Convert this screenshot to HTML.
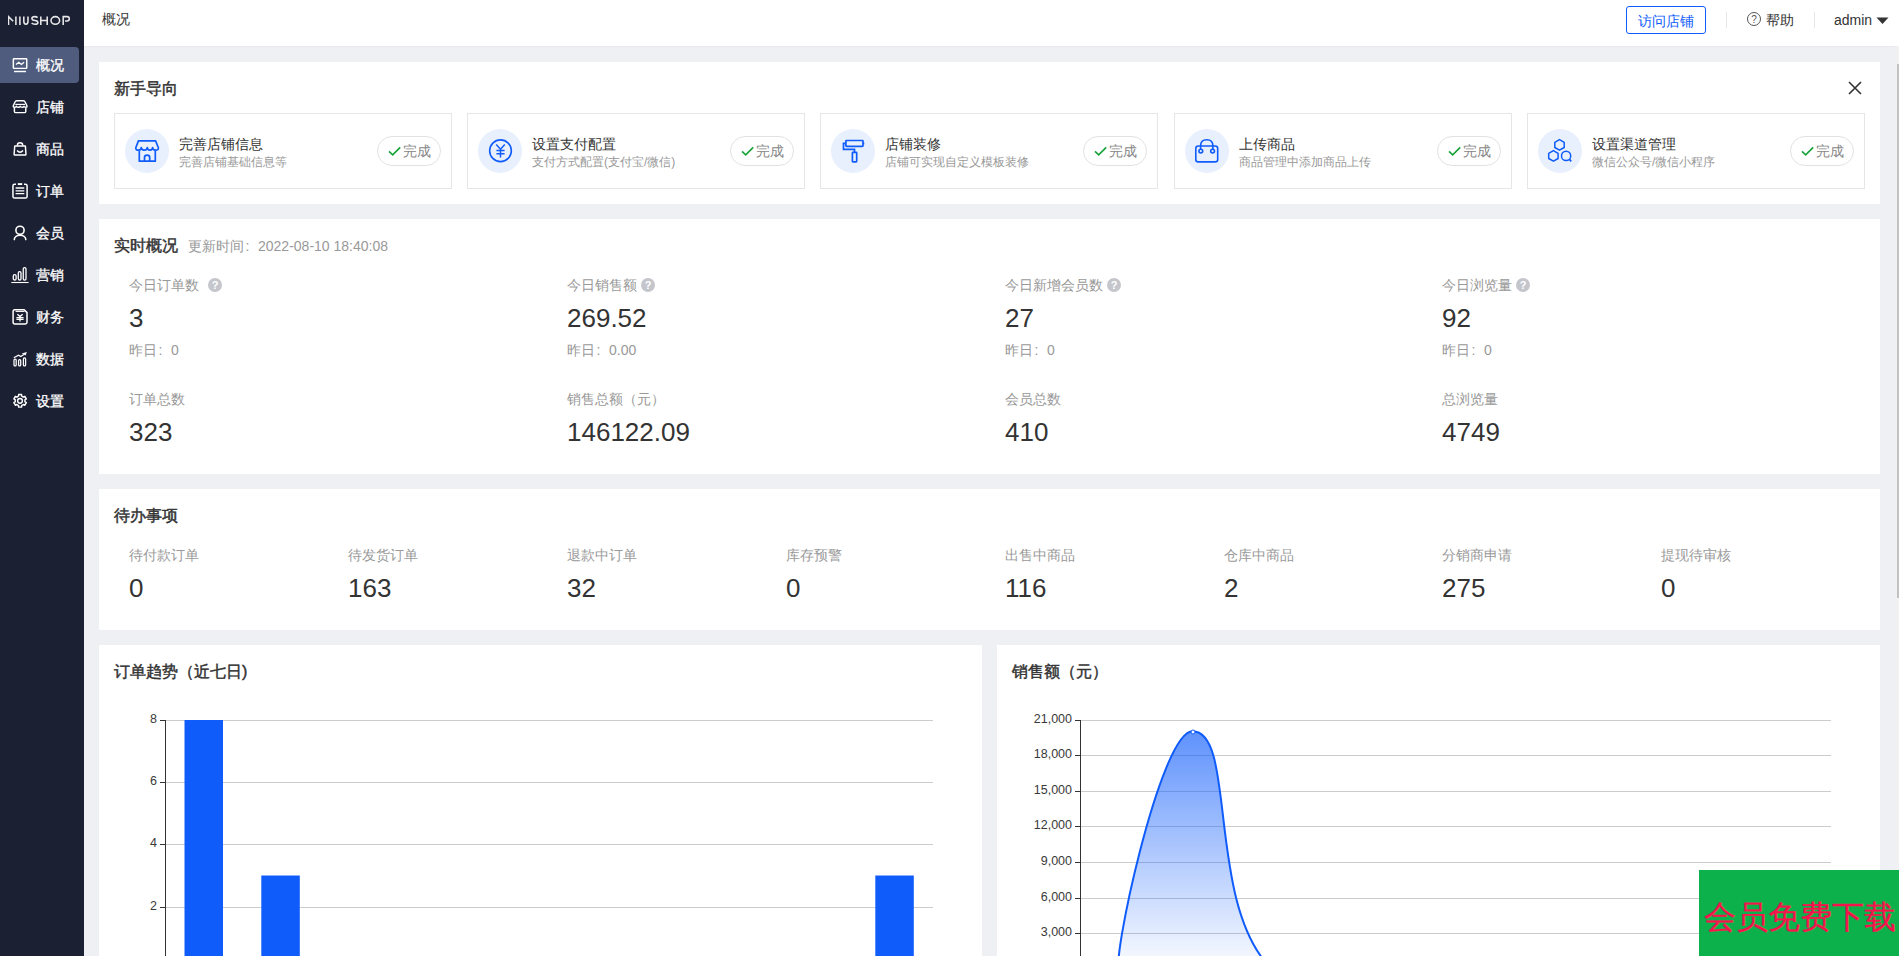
<!DOCTYPE html>
<html><head><meta charset="utf-8">
<style>
*{box-sizing:border-box;margin:0;padding:0}
html,body{width:1899px;height:956px;overflow:hidden;background:#eff0f4;font-family:"Liberation Sans",sans-serif;color:#333}
.abs{position:absolute;white-space:nowrap}
#side{position:absolute;left:0;top:0;width:84px;height:956px;background:#1c2033}
#side .item{position:absolute;left:0;width:79px;height:36px;color:#fff;font-size:14px;font-weight:normal;-webkit-text-stroke:0.3px #fff}
#side .item.on{background:#505c7d;border-radius:0 4px 4px 0}
#side .item span{position:absolute;left:36px;top:8px;line-height:20px}
#side .item svg{position:absolute;left:11px;top:10px;overflow:visible}
#head{position:absolute;left:84px;top:0;width:1815px;height:46px;background:#fff}
.card{position:absolute;background:#fff}
.ttl{position:absolute;font-size:16px;font-weight:normal;-webkit-text-stroke:0.45px #333;color:#333;line-height:22px;white-space:nowrap;margin-top:1px}
.gbox{position:absolute;top:51px;width:338px;height:76px;border:1px solid #e6e6e6}
.gbox .ic{position:absolute;left:10px;top:15px;width:44px;height:44px;border-radius:50%;background:#e8effd}
.gbox .ic svg{position:absolute;left:0;top:0}
.gbox .t1{position:absolute;left:64px;top:20px;font-size:14px;line-height:20px;color:#333;white-space:nowrap}
.gbox .t2{position:absolute;left:64px;top:40px;font-size:12px;line-height:16px;color:#999;white-space:nowrap}
.gbox .done{position:absolute;right:10px;top:22px;width:64px;height:30px;border:1px solid #e2e2e2;border-radius:15px;font-size:14px;color:#888;line-height:28px}
.gbox .done span{position:absolute;left:25px;top:0}
.gbox .done svg{position:absolute;left:10px;top:9px}
.st{position:absolute}
.st .l{position:absolute;left:0;top:0;font-size:14px;line-height:20px;color:#999;white-space:nowrap}
.st .v{position:absolute;left:0;top:28px;font-size:26px;line-height:30px;color:#333;white-space:nowrap}
.st .y{position:absolute;left:0;top:65px;font-size:14px;line-height:20px;color:#999;white-space:nowrap}
.q{display:inline-block;width:14px;height:14px;border-radius:50%;background:#c4c6cc;color:#fff;font-size:11px;line-height:14px;text-align:center;font-weight:bold;vertical-align:1px;margin-left:9px}
.cl{display:inline-block;width:14px;padding-left:1.5px}
.gl{position:absolute;height:1px;background:#ccc}
.yl{position:absolute;font-size:12px;line-height:14px;color:#333;text-align:right;white-space:nowrap}
</style></head><body>
<div id="side">
  <svg class="abs" style="left:8px;top:15px" width="64" height="11" viewBox="0 0 64 11">
    <g fill="none" stroke="#e8e8ea" stroke-width="1.55">
      <path d="M0.5 10V1.6L5.2 6.3"/>
      <path d="M7.9 1.5V10"/>
      <path d="M11.9 1.5V10"/>
      <path d="M15.8 1.5V6.3Q15.8 9.2 17.9 9.2Q20 9.2 20 6.3V1.5"/>
      <path d="M29.6 2.6Q28.6 1.6 26.8 1.6Q23.9 1.6 23.9 3.5Q23.9 5.2 26.9 5.5Q29.9 5.8 29.9 7.4Q29.9 9.2 26.9 9.2Q24.8 9.2 23.6 8"/>
      <path d="M32.8 1.5V10M32.8 5.5H39.2M39.2 1.5V10"/>
      <ellipse cx="47.3" cy="5.4" rx="4.3" ry="3.8"/>
      <path d="M55.2 10V1.6H59Q61.3 1.6 61.3 3.8Q61.3 6 59 6H57"/>
    </g>
  </svg>
  <div class="item on" style="top:47px"><svg width="18" height="18" viewBox="0 0 18 18"><g fill="none" stroke="#fff" stroke-width="1.45"><rect x="2.35" y="1.65" width="13.4" height="9.7" rx="0.6"/><path d="M5 7.55L7.8 5.3L10.4 7.45L13.1 5.2" stroke-width="1.3"/><path d="M3 14.5H15"/></g></svg><span>概况</span></div>
  <div class="item" style="top:89px"><svg width="18" height="18" viewBox="0 0 18 18"><g fill="none" stroke="#fff" stroke-width="1.45"><path d="M5.8 1.65H12.3Q13.6 1.65 14.1 3L15.9 6.8Q16.4 8.3 15 8.3Q13.1 8.3 13 7.2Q12.6 8.3 11.2 8.3Q9.4 8.3 9.2 7.2Q8.9 8.3 7.2 8.3Q5.6 8.3 5.4 7.2Q5.1 8.3 3.3 8.3Q2 8.3 2.3 6.8L4 3Q4.5 1.65 5.8 1.65Z" stroke-linejoin="round"/><path d="M4.3 5.4H14.1" stroke-width="1.2"/><path d="M3.4 9V12.6Q3.4 13.6 4.4 13.6H13.8Q14.8 13.6 14.8 12.6V9"/></g></svg><span>店铺</span></div>
  <div class="item" style="top:131px"><svg width="18" height="18" viewBox="0 0 18 18"><g fill="none" stroke="#fff" stroke-width="1.45"><path d="M6.4 4.8V4.2Q6.4 1.65 9.05 1.65Q11.7 1.65 11.7 4.2V4.8"/><path d="M4 5H14.1Q14.4 5 14.4 5.4L15 13.6Q15 14 14.6 14H3.5Q3.1 14 3.1 13.6L3.7 5.4Q3.7 5 4 5Z"/><path d="M6.1 9.6Q9.05 13 12 9.6"/></g></svg><span>商品</span></div>
  <div class="item" style="top:173px"><svg width="18" height="18" viewBox="0 0 18 18"><g fill="none" stroke="#fff" stroke-width="1.5"><path d="M5 1.3H3.6Q1.95 1.3 1.95 3V13.4Q1.95 15.1 3.6 15.1H14.4Q16.1 15.1 16.1 13.4V3Q16.1 1.3 14.4 1.3H13"/><path d="M6.8 1.1H11.2" stroke-width="1.9"/><path d="M4.6 5H13.3M4.6 7.8H13.3M4.6 10.6H13.3" stroke-width="1.3"/></g></svg><span>订单</span></div>
  <div class="item" style="top:215px"><svg width="18" height="18" viewBox="0 0 18 18"><g fill="none" stroke="#fff" stroke-width="1.6"><circle cx="9" cy="5.3" r="4.1"/><path d="M3.3 14.6C3.3 8.8 14.8 8.8 14.8 14.6" stroke-linecap="round"/></g></svg><span>会员</span></div>
  <div class="item" style="top:257px"><svg width="18" height="18" viewBox="0 0 18 18"><g fill="none" stroke="#fff" stroke-width="1.3"><rect x="2.3" y="7.6" width="2.8" height="5.4" rx="1.3"/><rect x="7.3" y="4.6" width="2.7" height="8.4" rx="1.3"/><rect x="12.25" y="0.65" width="2.75" height="12.4" rx="1.3"/><path d="M0.3 15.5H17.6" stroke-width="1.1"/></g></svg><span>营销</span></div>
  <div class="item" style="top:299px"><svg width="18" height="18" viewBox="0 0 18 18"><g fill="none" stroke="#fff" stroke-width="1.5"><path d="M3.8 0.8H13.2L16 3.6V13.3Q16 15 14.3 15H3.8Q2.1 15 2.1 13.3V2.5Q2.1 0.8 3.8 0.8Z" stroke-linejoin="round"/><path d="M4.6 2.4H13.5" stroke-width="1.1"/><path d="M6.4 5.3L9 7.6L11.7 5.3M9 7.6V12.5M5.4 8.6H12.6M5.4 10.4H12.6" stroke-width="1.3"/></g></svg><span>财务</span></div>
  <div class="item" style="top:341px"><svg width="18" height="18" viewBox="0 0 18 18"><g fill="none" stroke="#fff" stroke-width="1.25"><rect x="3" y="8.1" width="2.2" height="6.8" rx="1"/><rect x="7.6" y="8.6" width="2.1" height="6.3" rx="1"/><rect x="12.4" y="6.9" width="2.2" height="8" rx="1"/><path d="M2.8 6.8L7.5 4.2L9.8 5.6L12.8 3.4"/></g><path d="M15.9 0.9L10.8 2.6L14.6 4.6Z" fill="#fff"/></svg><span>数据</span></div>
  <div class="item" style="top:383px"><svg width="18" height="18" viewBox="0 0 18 18"><g fill="none" stroke="#fff" stroke-width="1.45" stroke-linejoin="round"><path d="M11.55 3.56 L10.70 3.17 L10.56 1.47 L7.64 1.47 L7.50 3.17 L6.65 3.56 L5.89 4.10 L4.35 3.37 L2.88 5.90 L4.29 6.87 L4.20 7.80 L4.29 8.73 L2.88 9.70 L4.35 12.23 L5.89 11.50 L6.65 12.04 L7.50 12.43 L7.64 14.13 L10.56 14.13 L10.70 12.43 L11.55 12.04 L12.31 11.50 L13.85 12.23 L15.32 9.70 L13.91 8.73 L14.00 7.80 L13.91 6.87 L15.32 5.90 L13.85 3.37 L12.31 4.10Z"/><circle cx="9" cy="7.8" r="2.4"/></g></svg><span>设置</span></div>
</div>

<div class="abs" style="left:85px;top:46px;width:1810px;height:1px;background:#e9e9eb"></div>
<div id="head">
  <div class="abs" style="left:18px;top:9px;font-size:14px;line-height:20px;color:#333">概况</div>
  <div class="abs" style="left:1542px;top:6px;width:80px;height:28px;border:1px solid #105cfb;border-radius:3px;color:#105cfb;font-size:14px;line-height:28px;text-align:center">访问店铺</div>
  <div class="abs" style="left:1642px;top:12px;width:1px;height:16px;background:#e6e6e6"></div>
  <svg class="abs" style="left:1662px;top:11px" width="16" height="16" viewBox="0 0 16 16"><circle cx="8" cy="8" r="6.5" fill="none" stroke="#555" stroke-width="1"/><text x="8" y="12" font-size="10" text-anchor="middle" fill="#555" font-family="Liberation Sans">?</text></svg>
  <div class="abs" style="left:1682px;top:10px;font-size:14px;line-height:20px;color:#333">帮助</div>
  <div class="abs" style="left:1730px;top:12px;width:1px;height:16px;background:#e6e6e6"></div>
  <div class="abs" style="left:1750px;top:10px;font-size:14px;line-height:20px;color:#333">admin</div>
  <svg class="abs" style="left:1792px;top:16.5px" width="13" height="8" viewBox="0 0 13 8"><path d="M0.5 0.5H12.5L6.5 7Z" fill="#333"/></svg>
</div>

<!-- Guide card -->
<div class="card" style="left:99px;top:62px;width:1781px;height:142px">
  <div class="ttl" style="left:15px;top:15px">新手导向</div>
  <svg class="abs" style="left:1749px;top:19px" width="14" height="14" viewBox="0 0 14 14"><path d="M1 1L13 13M13 1L1 13" stroke="#333" stroke-width="1.6"/></svg>
  <div class="gbox" style="left:15px">
    <div class="ic"><svg width="44" height="44" viewBox="0 0 44 44"><g fill="none" stroke="#105cfb" stroke-width="1.7" stroke-linejoin="round"><path d="M13.4 11.9H30.6L33.4 18.7Q33.6 21.2 30.5 21.2Q27.6 21.2 27.6 18.6Q27.6 21.2 25 21.2Q22.3 21.2 22.3 18.6Q22.3 21.2 19.3 21.2Q16.3 21.2 16.3 18.6Q16.3 21.2 13.5 21.2Q10.6 21.2 10.8 18.7Z"/><path d="M14.3 21.4V32.2H30.3V21.4"/><path d="M19.5 32.2V28.6Q19.5 26.2 22.1 26.2Q24.7 26.2 24.7 28.6V32.2"/></g></svg></div>
    <div class="t1">完善店铺信息</div><div class="t2">完善店铺基础信息等</div>
    <div class="done"><svg width="14" height="11" viewBox="0 0 14 11"><path d="M1 5.3L4.7 8.8L12.2 1.3" fill="none" stroke="#1aa33b" stroke-width="1.7"/></svg><span>完成</span></div>
  </div>
  <div class="gbox" style="left:368px">
    <div class="ic"><svg width="44" height="44" viewBox="0 0 44 44"><g fill="none" stroke="#105cfb" stroke-width="1.6"><circle cx="22.5" cy="21.75" r="10.85"/><path d="M18.2 15.6L22.5 20.2L26.8 15.6M22.5 20.2V28.6M18.4 21.4H26.6M18.4 24.7H26.6" stroke-width="1.5"/></g></svg></div>
    <div class="t1">设置支付配置</div><div class="t2">支付方式配置(支付宝/微信)</div>
    <div class="done"><svg width="14" height="11" viewBox="0 0 14 11"><path d="M1 5.3L4.7 8.8L12.2 1.3" fill="none" stroke="#1aa33b" stroke-width="1.7"/></svg><span>完成</span></div>
  </div>
  <div class="gbox" style="left:721px">
    <div class="ic"><svg width="44" height="44" viewBox="0 0 44 44"><g fill="none" stroke="#105cfb" stroke-width="1.7"><rect x="14.9" y="11.5" width="17.1" height="5.8" rx="0.6"/><path d="M32.6 13.5V15.4" stroke-width="1.4"/><path d="M14.9 14.4H12.5V20.4H23.5V23.3"/><rect x="21.4" y="23.3" width="4.3" height="9.6" rx="0.6"/></g></svg></div>
    <div class="t1">店铺装修</div><div class="t2">店铺可实现自定义模板装修</div>
    <div class="done"><svg width="14" height="11" viewBox="0 0 14 11"><path d="M1 5.3L4.7 8.8L12.2 1.3" fill="none" stroke="#1aa33b" stroke-width="1.7"/></svg><span>完成</span></div>
  </div>
  <div class="gbox" style="left:1075px">
    <div class="ic"><svg width="44" height="44" viewBox="0 0 44 44"><g fill="none" stroke="#105cfb" stroke-width="1.6"><path d="M15.6 20V17Q15.6 10.8 21.75 10.8Q27.9 10.8 27.9 17V20"/><rect x="10.8" y="17" width="21.9" height="15.9" rx="2.5"/><circle cx="15.8" cy="22.1" r="1.9" fill="#e8effd"/><circle cx="27.6" cy="22.1" r="1.9" fill="#e8effd"/></g></svg></div>
    <div class="t1">上传商品</div><div class="t2">商品管理中添加商品上传</div>
    <div class="done"><svg width="14" height="11" viewBox="0 0 14 11"><path d="M1 5.3L4.7 8.8L12.2 1.3" fill="none" stroke="#1aa33b" stroke-width="1.7"/></svg><span>完成</span></div>
  </div>
  <div class="gbox" style="left:1428px">
    <div class="ic"><svg width="44" height="44" viewBox="0 0 44 44"><g fill="none" stroke="#105cfb" stroke-width="1.5" stroke-linejoin="round"><path d="M21.5 10.6L26.2 13.3V18.5L21.5 21.2L16.8 18.5V13.3Z"/><path d="M15.4 21.6L20.1 24.3V29.5L15.4 32.2L10.7 29.5V24.3Z"/><circle cx="28.1" cy="26.9" r="4.6"/><path d="M31.5 30.4L33.2 32.4" stroke-width="1.7"/></g></svg></div>
    <div class="t1">设置渠道管理</div><div class="t2">微信公众号/微信小程序</div>
    <div class="done"><svg width="14" height="11" viewBox="0 0 14 11"><path d="M1 5.3L4.7 8.8L12.2 1.3" fill="none" stroke="#1aa33b" stroke-width="1.7"/></svg><span>完成</span></div>
  </div>
</div>

<!-- Realtime card -->
<div class="card" style="left:99px;top:219px;width:1781px;height:255px">
  <div class="ttl" style="left:15px;top:15px">实时概况</div>
  <div class="abs" style="left:89px;top:17px;font-size:14px;line-height:20px;color:#999">更新时间<span class="cl">:</span>2022-08-10 18:40:08</div>
  <div class="st" style="left:30px;top:56px"><div class="l">今日订单数<span class="q">?</span></div><div class="v">3</div><div class="y">昨日<span class="cl">:</span>0</div></div>
  <div class="st" style="left:468px;top:56px"><div class="l">今日销售额<span class="q" style="margin-left:4px">?</span></div><div class="v">269.52</div><div class="y">昨日<span class="cl">:</span>0.00</div></div>
  <div class="st" style="left:906px;top:56px"><div class="l">今日新增会员数<span class="q" style="margin-left:4px">?</span></div><div class="v">27</div><div class="y">昨日<span class="cl">:</span>0</div></div>
  <div class="st" style="left:1343px;top:56px"><div class="l">今日浏览量<span class="q" style="margin-left:4px">?</span></div><div class="v">92</div><div class="y">昨日<span class="cl">:</span>0</div></div>
  <div class="st" style="left:30px;top:170px"><div class="l">订单总数</div><div class="v">323</div></div>
  <div class="st" style="left:468px;top:170px"><div class="l">销售总额（元）</div><div class="v">146122.09</div></div>
  <div class="st" style="left:906px;top:170px"><div class="l">会员总数</div><div class="v">410</div></div>
  <div class="st" style="left:1343px;top:170px"><div class="l">总浏览量</div><div class="v">4749</div></div>
</div>

<!-- Todo card -->
<div class="card" style="left:99px;top:489px;width:1781px;height:141px">
  <div class="ttl" style="left:15px;top:15px">待办事项</div>
  <div class="st" style="left:30px;top:56px"><div class="l">待付款订单</div><div class="v">0</div></div>
  <div class="st" style="left:249px;top:56px"><div class="l">待发货订单</div><div class="v">163</div></div>
  <div class="st" style="left:468px;top:56px"><div class="l">退款中订单</div><div class="v">32</div></div>
  <div class="st" style="left:687px;top:56px"><div class="l">库存预警</div><div class="v">0</div></div>
  <div class="st" style="left:906px;top:56px"><div class="l">出售中商品</div><div class="v">116</div></div>
  <div class="st" style="left:1125px;top:56px"><div class="l">仓库中商品</div><div class="v">2</div></div>
  <div class="st" style="left:1343px;top:56px"><div class="l">分销商申请</div><div class="v">275</div></div>
  <div class="st" style="left:1562px;top:56px"><div class="l">提现待审核</div><div class="v">0</div></div>
</div>

<!-- Order chart -->
<div class="card" style="left:99px;top:645px;width:883px;height:320px">
  <div class="ttl" style="left:15px;top:15px">订单趋势（近七日)</div>
</div>
<svg class="abs" style="left:0;top:0" width="1899" height="956">
  <g stroke="#ccc" stroke-width="1">
    <path d="M165 720.5H933M165 782.5H933M165 844.5H933M165 907.5H933"/>
  </g>
  <g stroke="#333" stroke-width="1"><path d="M165.5 720V956M160 720.5H165M160 782.5H165M160 844.5H165M160 907.5H165"/></g>
  <g fill="#105cfb"><rect x="184.5" y="720" width="38.5" height="240"/><rect x="261.3" y="875.5" width="38.5" height="90"/><rect x="875.3" y="875.5" width="38.5" height="90"/></g>
  <g font-family="Liberation Sans" font-size="12.5" fill="#3a3a3a" text-anchor="end">
    <text x="157" y="722.5">8</text><text x="157" y="784.5">6</text><text x="157" y="846.5">4</text><text x="157" y="909.5">2</text>
  </g>
</svg>

<!-- Sales chart -->
<div class="card" style="left:997px;top:645px;width:883px;height:320px">
  <div class="ttl" style="left:15px;top:15px">销售额（元）</div>
</div>
<svg class="abs" style="left:0;top:0" width="1899" height="956">
  <defs><linearGradient id="gr" x1="0" y1="720" x2="0" y2="968" gradientUnits="userSpaceOnUse"><stop offset="0" stop-color="#105cfb" stop-opacity="0.7"/><stop offset="1" stop-color="#105cfb" stop-opacity="0.02"/></linearGradient></defs>
  <g stroke="#ccc" stroke-width="1">
    <path d="M1080 720.5H1831M1080 755.5H1831M1080 791.5H1831M1080 826.5H1831M1080 862.5H1831M1080 898.5H1831M1080 933.5H1831"/>
  </g>
  <path id="curve" d="M1119.84 968.4C1109.14 973.34 1159.51 731.30 1192.60 731.30 C1236.72 731.30 1206.41 904.08 1271.10 968.4" fill="url(#gr)" stroke="none"/>
  <path d="M1119.84 968.4C1109.14 973.34 1159.51 731.30 1192.60 731.30 C1236.72 731.30 1206.41 904.08 1271.10 968.4" fill="none" stroke="#105cfb" stroke-width="2"/>
  <circle cx="1193" cy="732" r="2" fill="#fff" stroke="#105cfb" stroke-width="1"/>
  <g stroke="#333" stroke-width="1"><path d="M1080.5 720V956M1075 720.5H1080M1075 755.5H1080M1075 791.5H1080M1075 826.5H1080M1075 862.5H1080M1075 898.5H1080M1075 933.5H1080"/></g>
  <g font-family="Liberation Sans" font-size="12.5" fill="#3a3a3a" text-anchor="end">
    <text x="1072" y="722.5">21,000</text><text x="1072" y="757.5">18,000</text><text x="1072" y="793.5">15,000</text><text x="1072" y="828.5">12,000</text><text x="1072" y="864.5">9,000</text><text x="1072" y="900.5">6,000</text><text x="1072" y="935.5">3,000</text>
  </g>
</svg>

<!-- scrollbar -->
<div class="abs" style="left:1895px;top:46px;width:4px;height:910px;background:#f1f1f1"></div>
<div class="abs" style="left:1897px;top:64px;width:2px;height:534px;background:#c1c1c1"></div>

<!-- watermark -->
<div class="abs" style="left:1699px;top:870px;width:200px;height:86px;background:#0db14b"></div>
<div class="abs" style="left:1704px;top:897px;font-size:31.5px;line-height:40px;color:#f5134d;letter-spacing:0;-webkit-text-stroke:0.3px #f5134d">会员免费下载</div>
</body></html>
